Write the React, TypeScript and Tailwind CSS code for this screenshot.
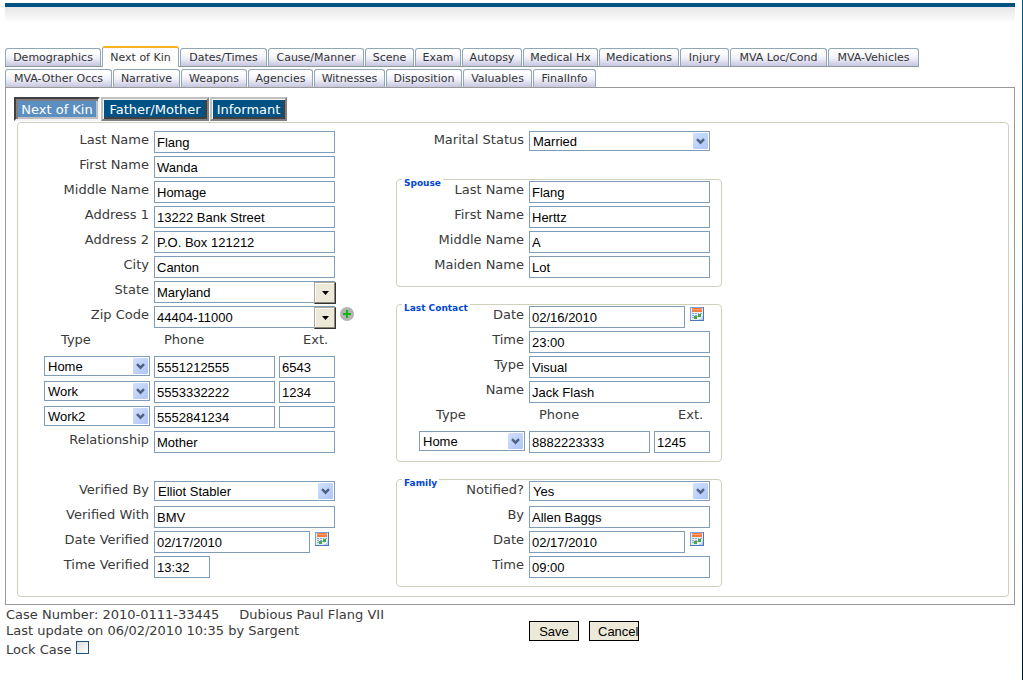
import { useId, type ReactNode } from "react";

type Tab = { label: string; width: string; active?: boolean };

const topTabs: Tab[] = [
  { label: "Demographics", width: "w-[96px]" },
  { label: "Next of Kin", width: "w-[77px]", active: true },
  { label: "Dates/Times", width: "w-[87px]" },
  { label: "Cause/Manner", width: "w-[96px]" },
  { label: "Scene", width: "w-[49px]" },
  { label: "Exam", width: "w-[46px]" },
  { label: "Autopsy", width: "w-[60px]" },
  { label: "Medical Hx", width: "w-[75px]" },
  { label: "Medications", width: "w-[80px]" },
  { label: "Injury", width: "w-[49px]" },
  { label: "MVA Loc/Cond", width: "w-[97px]" },
  { label: "MVA-Vehicles", width: "w-[91px]" },
];

const bottomTabs: Tab[] = [
  { label: "MVA-Other Occs", width: "w-[107px]" },
  { label: "Narrative", width: "w-[67px]" },
  { label: "Weapons", width: "w-[66px]" },
  { label: "Agencies", width: "w-[65px]" },
  { label: "Witnesses", width: "w-[71px]" },
  { label: "Disposition", width: "w-[76px]" },
  { label: "Valuables", width: "w-[69px]" },
  { label: "FinalInfo", width: "w-[63px]" },
];

const labelFont = "font-['DejaVu_Sans',Verdana,sans-serif]";
const inputFont = "font-['Liberation_Sans',Arial,sans-serif]";
const boxClass = `h-[22px] border border-[#7f9db9] bg-white px-[2px] text-[13px] text-black outline-none ${inputFont}`;

function TabButton({ label, width, active }: Tab) {
  const look = active
    ? "relative -mb-px h-[21px] border-x border-t-2 border-x-[#91a7b4] border-t-[#f9b21f] bg-white"
    : "h-[18px] border-x border-t border-[#91a7b4] bg-linear-to-b from-white from-20% via-[#efeffa] via-55% to-[#c6c6de]";
  return (
    <button
      type="button"
      className={`${width} ${look} flex shrink-0 items-center justify-center rounded-t-[3px] text-[11px] leading-4 whitespace-nowrap text-[#333]`}
    >
      {label}
    </button>
  );
}

function SubTab({ label, width, active }: Tab) {
  const look = active
    ? "border-t-[#404040] border-l-[#404040] border-r-[#f4f4f4] border-b-[#f4f4f4] bg-[#5b8fc2] shadow-[inset_2px_2px_0_#808080,inset_-2px_-2px_0_#c0c0c0]"
    : "border-t-[#c0c0c0] border-l-[#c0c0c0] border-r-[#808080] border-b-[#808080] bg-[#005284] shadow-[inset_1px_1px_0_#f4f4f4,inset_-2px_-2px_0_#404040]";
  return (
    <button
      type="button"
      className={`${width} ${look} flex h-6 items-center justify-center border-2 pt-[2px] text-[13px] leading-4 whitespace-nowrap text-white`}
    >
      {label}
    </button>
  );
}

function Chevron() {
  return (
    <span className="pointer-events-none absolute top-[2px] right-[2px] flex h-4 w-[15px] items-center justify-center rounded-[1px] bg-linear-to-br from-[#d3e0fd] to-[#aec4f7]">
      <svg width="9" height="7" viewBox="0 0 9 7" aria-hidden="true">
        <path d="M1 1.2 L4.5 4.7 L8 1.2" fill="none" stroke="#4d6185" strokeWidth="2.4" />
      </svg>
    </span>
  );
}

function Select({ value, width, id, name }: { value: string; width: string; id?: string; name?: string }) {
  return (
    <span className={`relative block h-5 ${width}`}>
      <select
        id={id}
        aria-label={name}
        defaultValue={value}
        className={`block h-5 w-full appearance-none border border-[#7f9db9] bg-white pt-[2px] pr-5 pl-[3px] text-[13px] leading-4 text-black outline-none ${inputFont}`}
      >
        <option>{value}</option>
      </select>
      <Chevron />
    </span>
  );
}

function Combo({ value, id }: { value: string; id: string }) {
  return (
    <span className="relative block w-[181px]">
      <input id={id} defaultValue={value} className={`${boxClass} block w-full`} />
      <button
        type="button"
        aria-label="Open list"
        className="absolute top-px -right-px flex size-[22px] items-center justify-center border border-t-[#aca899] border-r-[#333] border-b-[#333] border-l-[#aca899] bg-[#ece9d8] shadow-[inset_-1px_-1px_0_#8b8878,inset_1px_1px_0_#fff]"
      >
        <svg width="7" height="4" viewBox="0 0 7 4" aria-hidden="true">
          <path d="M0 0 H7 L3.5 4 Z" fill="#000" />
        </svg>
      </button>
    </span>
  );
}

function CalendarButton() {
  return (
    <button type="button" aria-label="Pick a date" className="mt-px ml-[5px] block size-[14px]">
      <svg width="14" height="14" viewBox="0 0 14 14" aria-hidden="true" shapeRendering="crispEdges">
        <rect width="14" height="14" fill="#7fa3d8" />
        <path d="M0 13 H13 V0 H14 V14 H0 Z" fill="#4a78bb" />
        <rect x="1" y="1" width="12" height="12" fill="#e4eefb" />
        <rect x="2" y="1" width="10" height="4" fill="#f47b3c" />
        <rect x="2" y="2" width="10" height="1" fill="#fba06a" />
        <path
          d="M2 6h2v1h-2z M5 6h2v1h-2z M8 6h1v1h-1z M10 6h2v1h-2z M2 8h2v1h-2z M5 8h2v1h-2z M2 10h2v1h-2z"
          fill="#8fa6cf"
        />
        <rect x="8" y="7" width="3" height="3" fill="#4c9f4c" />
        <rect x="4" y="9" width="3" height="3" fill="#4c9f4c" />
        <rect x="7" y="9" width="1" height="1" fill="#8cc38c" />
        <path d="M12 9h1v4h-4v-1h2v-1h1z" fill="#b7cdf0" />
      </svg>
    </button>
  );
}

function AddButton() {
  return (
    <button type="button" aria-label="Add zip code" className="mt-px ml-[5px] block size-[14px]">
      <svg width="14" height="14" viewBox="0 0 14 14" aria-hidden="true">
        <circle cx="7" cy="7" r="7" fill="#b3b3b3" />
        <path d="M7 3 V11 M3 7 H11" stroke="#0fb80f" strokeWidth="2" />
      </svg>
    </button>
  );
}

type FieldProps = {
  label: string;
  value: string;
  side: "left" | "right";
  kind?: "text" | "select" | "combo" | "date" | "short";
  extra?: ReactNode;
};

function Field({ label, value, side, kind = "text", extra }: FieldProps) {
  const id = useId();
  return (
    <div className="flex h-[25px] items-start">
      <label
        htmlFor={id}
        className={`${side === "left" ? "w-[131px]" : "w-[127px]"} mr-[5px] shrink-0 text-right text-[13px] leading-[18px] whitespace-nowrap`}
      >
        {label}
      </label>
      {kind === "text" && <input id={id} defaultValue={value} className={`${boxClass} w-[181px]`} />}
      {kind === "short" && <input id={id} defaultValue={value} className={`${boxClass} w-[56px]`} />}
      {kind === "select" && <Select id={id} value={value} width="w-[181px]" />}
      {kind === "combo" && <Combo id={id} value={value} />}
      {kind === "date" && (
        <>
          <input id={id} defaultValue={value} className={`${boxClass} w-[156px]`} />
          <CalendarButton />
        </>
      )}
      {extra}
    </div>
  );
}

function PhoneGrid({ rows, indent }: { rows: string[][]; indent: string }) {
  return (
    <div className={indent}>
      <div className="grid h-[25px] grid-cols-[106px_121px_56px] gap-x-1 text-[13px] leading-[18px]">
        <span className="pl-[17px]">Type</span>
        <span className="pl-[10px]">Phone</span>
        <span className="pl-6">Ext.</span>
      </div>
      {rows.map(([type, phone, ext]) => (
        <div key={phone} className="grid h-[25px] grid-cols-[106px_121px_56px] items-start gap-x-1">
          <Select value={type} width="w-full" name="Phone type" />
          <input aria-label="Phone" defaultValue={phone} className={`${boxClass} w-full`} />
          <input aria-label="Extension" defaultValue={ext} className={`${boxClass} w-full`} />
        </div>
      ))}
    </div>
  );
}

function Group({ title, children }: { title: string; children: ReactNode }) {
  return (
    <fieldset className="relative rounded-[4px] border border-[#d0d0bf] pt-px pb-[5px]">
      <legend className="absolute -top-[3px] left-[5px] bg-white px-[2px] text-[9px] leading-3 font-bold text-[#0046d5]">
        {title}
      </legend>
      {children}
    </fieldset>
  );
}

const actionClass = `h-5 w-[50px] overflow-hidden border border-black bg-[#ece9d8] px-2 pt-[2px] text-[13px] leading-4 text-black ${inputFont}`;

export default function App() {
  return (
    <div className={`flex min-h-screen bg-white text-[#3a3a3a] ${labelFont}`}>
      <div className="min-w-0 flex-1 pt-[3px] pr-[7px] pl-[5px]">
        <header>
          <div className="h-1 bg-[#005284]" />
          <div className="h-4 bg-linear-to-b from-[#e6e6e6] to-white" />
        </header>

        <nav aria-label="Case sections" className="mt-[23px]">
          <div className="flex w-fit items-end gap-px border-b border-[#8a9a9e]">
            {topTabs.map((t) => (
              <TabButton key={t.label} {...t} />
            ))}
          </div>
          <div className="mt-[2px] flex gap-px">
            {bottomTabs.map((t) => (
              <TabButton key={t.label} {...t} />
            ))}
          </div>
        </nav>

        <main className="border border-[#999] pt-[9px] pr-[5px] pb-[7px] pl-2">
          <div className="flex gap-px">
            <SubTab label="Next of Kin" width="w-[86px]" active />
            <SubTab label="Father/Mother" width="w-[108px]" />
            <SubTab label="Informant" width="w-[77px]" />
          </div>

          <form className="mt-px ml-[3px] flex rounded-[4px] border border-[#d0d0bf] pt-2 pb-[9px]">
            <div className="w-[378px] shrink-0">
              <Field side="left" label="Last Name" value="Flang" />
              <Field side="left" label="First Name" value="Wanda" />
              <Field side="left" label="Middle Name" value="Homage" />
              <Field side="left" label="Address 1" value="13222 Bank Street" />
              <Field side="left" label="Address 2" value="P.O. Box 121212" />
              <Field side="left" label="City" value="Canton" />
              <Field side="left" label="State" value="Maryland" kind="combo" />
              <Field side="left" label="Zip Code" value="44404-11000" kind="combo" extra={<AddButton />} />
              <PhoneGrid
                indent="pl-[26px]"
                rows={[
                  ["Home", "5551212555", "6543"],
                  ["Work", "5553332222", "1234"],
                  ["Work2", "5552841234", ""],
                ]}
              />
              <Field side="left" label="Relationship" value="Mother" />
              <div className="mt-[25px]">
                <Field side="left" label="Verified By" value="Elliot Stabler" kind="select" />
                <Field side="left" label="Verified With" value="BMV" />
                <Field side="left" label="Date Verified" value="02/17/2010" kind="date" />
                <Field side="left" label="Time Verified" value="13:32" kind="short" />
              </div>
            </div>

            <div className="w-[326px] shrink-0">
              <div className="mb-[23px] pl-px">
                <Field side="right" label="Marital Status" value="Married" kind="select" />
              </div>
              <div className="flex flex-col gap-[17px]">
                <Group title="Spouse">
                  <Field side="right" label="Last Name" value="Flang" />
                  <Field side="right" label="First Name" value="Herttz" />
                  <Field side="right" label="Middle Name" value="A" />
                  <Field side="right" label="Maiden Name" value="Lot" />
                </Group>
                <Group title="Last Contact">
                  <Field side="right" label="Date" value="02/16/2010" kind="date" />
                  <Field side="right" label="Time" value="23:00" />
                  <Field side="right" label="Type" value="Visual" />
                  <Field side="right" label="Name" value="Jack Flash" />
                  <PhoneGrid indent="pl-[22px]" rows={[["Home", "8882223333", "1245"]]} />
                </Group>
                <Group title="Family">
                  <Field side="right" label="Notified?" value="Yes" kind="select" />
                  <Field side="right" label="By" value="Allen Baggs" />
                  <Field side="right" label="Date" value="02/17/2010" kind="date" />
                  <Field side="right" label="Time" value="09:00" />
                </Group>
              </div>
            </div>
          </form>
        </main>

        <footer className="flex items-start pt-[2px] text-[13px] leading-4">
          <div className="w-[524px] pl-px">
            <p className="flex gap-5">
              <span>Case Number: 2010-0111-33445</span>
              <span>Dubious Paul Flang VII</span>
            </p>
            <p>Last update on 06/02/2010 10:35 by Sargent</p>
            <div className="mt-[2px] flex items-start">
              <label htmlFor="lock-case" className="leading-[18px]">
                Lock Case
              </label>
              <input
                id="lock-case"
                type="checkbox"
                className="ml-1 size-[13px] appearance-none border border-[#1c5180] bg-linear-to-br from-[#dcdcd7] to-white"
              />
            </div>
          </div>
          <div className="flex gap-[10px] pt-[14px]">
            <button type="button" className={actionClass}>
              Save
            </button>
            <button type="button" className={actionClass}>
              Cancel
            </button>
          </div>
        </footer>
      </div>
      <div className="w-px bg-linear-to-b from-[#005a86] to-[#00141e]" />
    </div>
  );
}
